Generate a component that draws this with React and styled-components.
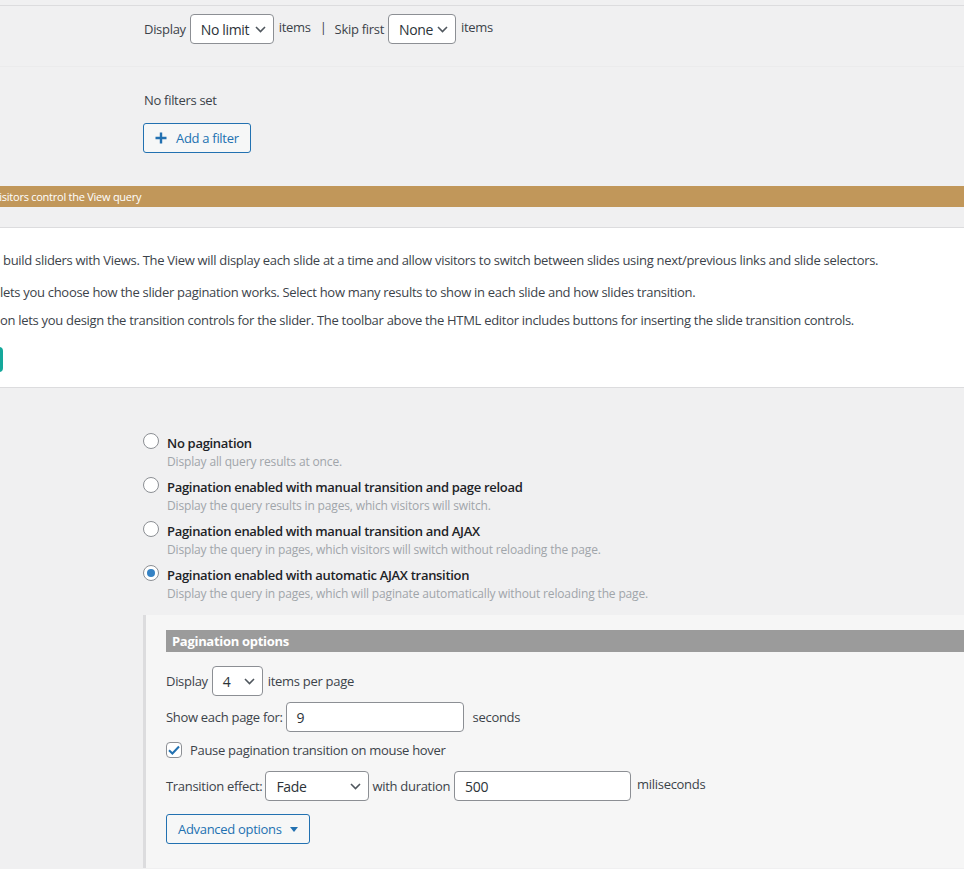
import React from 'react';
import styled, { createGlobalStyle } from 'styled-components';

const FONT = `"Open Sans", "Noto Sans", sans-serif`;

const GlobalStyle = createGlobalStyle`
    body { margin: 0; background: #f0f0f1; font-family: ${FONT}; color: #3c434a; font-size: 13px; letter-spacing: -0.3px; }
    * { box-sizing: border-box; }
`;

const Page = styled.div`
    width: 964px; height: 869px; overflow: hidden; background: #f0f0f1;
`;

const TopRule = styled.div`
    height: 6px; border-bottom: 1px solid #dcdcde;
`;

const QueryRow = styled.div`
    height: 61px; padding: 8px 0 0 144px;
    display: flex; align-items: flex-start;
    border-bottom: 1px solid #ebebec;
`;

const Label = styled.span`
    line-height: ${p => p.$lh || 30}px; white-space: nowrap;
    color: ${p => p.$color || '#3c434a'};
    margin: 0 ${p => p.$mr || 0}px 0 ${p => p.$ml || 0}px;
`;

const SelectWrap = styled.div`
    display: flex; align-items: center; justify-content: space-between;
    width: ${p => p.$w}px; height: 30px; padding: 0 7px 0 10px;
    background: #fff; border: 1px solid #8c8f94; border-radius: 4px;
    color: #2c3338; font-size: 14px; letter-spacing: -0.35px; flex-shrink: 0;
    margin: 0 ${p => p.$mr || 0}px 0 ${p => p.$ml || 0}px;
`;

const Input = styled.div`
    width: ${p => p.$w}px; height: 30px; padding: 0 10px;
    margin: 0 ${p => p.$mr || 0}px 0 ${p => p.$ml || 0}px;
    background: #fff; border: 1px solid #8c8f94; border-radius: 4px;
    display: flex; align-items: center; color: #2c3338; font-size: 14px; flex-shrink: 0;
`;

const Chevron = () => (
    <svg width="11" height="7" viewBox="0 0 11 7" fill="none">
        <path d="M1 1l4.5 4.5L10 1" stroke="#50575e" strokeWidth="1.6" />
    </svg>
);

const Select = ({ w, ml, mr, children }) => (
    <SelectWrap $w={w} $ml={ml} $mr={mr}>
        <span>{children}</span>
        <Chevron />
    </SelectWrap>
);

const FilterSection = styled.div`
    height: 119px; padding: 25px 0 0 143px;
`;

const NoFilters = styled.div`
    line-height: 17px; padding-left: 1px;
`;

const OutlineButton = styled.button`
    display: inline-flex; align-items: center; gap: ${p => p.$gap || 8}px;
    height: 30px; padding: 0 ${p => p.$pr || 11}px 0 11px; margin-top: ${p => p.$mt || 0}px;
    font-family: ${FONT}; font-size: 13px; letter-spacing: -0.3px; color: #2271b1;
    background: #f6f7f7; border: 1px solid #2271b1; border-radius: 3px; cursor: pointer;
`;

const GoldBar = styled.div`
    height: 21px; background: #c1975a; color: #fff;
    font-size: 11px; letter-spacing: -0.25px; line-height: 21px; text-indent: -7px;
    white-space: nowrap; overflow: hidden;
`;

const IntroBox = styled.div`
    margin-top: 20px; height: 161px; background: #fff;
    border-top: 1px solid #dcdcde; border-bottom: 1px solid #dcdcde;
    padding-top: 23px; overflow: hidden;
`;

const IntroLine = styled.p`
    margin: ${p => p.$mt || 0}px 0 0; line-height: 18px; white-space: nowrap;
    padding-left: ${p => p.$pl || 0}px; color: #3c434a;
`;

const TealButton = styled.div`
    width: 103px; height: 25px; margin: 18px 0 0 -100px;
    background: #14a89b; border-radius: 4px;
`;

const PaginationSection = styled.div`
    padding: 45px 0 0 143px;
`;

const Option = styled.div`
    display: grid; grid-template-columns: 24px 1fr;
    margin-bottom: 7px;
`;

const Radio = styled.span`
    width: 16px; height: 16px; border-radius: 50%;
    border: 1px solid #8c8f94; background: #fff;
    display: flex; align-items: center; justify-content: center;
    &::after {
        content: ''; width: 8px; height: 8px; border-radius: 50%;
        background: ${p => p.$checked ? '#3582c4' : 'transparent'};
    }
`;

const OptionTitle = styled.div`
    font-weight: 600; color: #1d2327; line-height: 20px;
`;

const OptionDesc = styled.div`
    grid-column: 2; font-size: 12px; letter-spacing: -0.15px; color: #a0a5aa; line-height: 17px;
`;

const Panel = styled.div`
    margin-top: 13px; border-left: 3px solid #dcdcde; background: #f6f6f6;
    padding: 15px 0 24px 20px;
`;

const PanelHeader = styled.div`
    height: 22px; line-height: 22px; padding-left: 6px;
    background: #9b9b9b; color: #fff; font-weight: 700;
`;

const FieldRow = styled.div`
    display: flex; align-items: ${p => p.$center ? 'center' : 'flex-start'};
    margin-top: ${p => p.$mt || 0}px;
`;

const CheckBox = styled.span`
    width: 16px; height: 16px; margin-right: 8px;
    border: 1px solid #8c8f94; border-radius: 4px;
    background: #fff; display: flex; align-items: center; justify-content: center;
`;

const Caret = styled.span`
    width: 0; height: 0; margin-left: 2px;
    border-left: 4px solid transparent; border-right: 4px solid transparent;
    border-top: 5px solid #2271b1;
`;

const options = [
    { title: 'No pagination', desc: 'Display all query results at once.' },
    { title: 'Pagination enabled with manual transition and page reload', desc: 'Display the query results in pages, which visitors will switch.' },
    { title: 'Pagination enabled with manual transition and AJAX', desc: 'Display the query in pages, which visitors will switch without reloading the page.' },
    { title: 'Pagination enabled with automatic AJAX transition', desc: 'Display the query in pages, which will paginate automatically without reloading the page.', checked: true },
];

function App() {
    return (
        <Page>
            <GlobalStyle />
            <TopRule />
            <QueryRow>
                <Label>Display</Label>
                <Select w={84} ml={4}>No limit</Select>
                <Label $lh={26} $ml={5}>items</Label>
                <Label $lh={26} $ml={9} $mr={8}>|</Label>
                <Label>Skip first</Label>
                <Select w={68} ml={4}>None</Select>
                <Label $lh={26} $ml={5}>items</Label>
            </QueryRow>

            <FilterSection>
                <NoFilters>No filters set</NoFilters>
                <OutlineButton $mt={14} $gap={9}>
                    <svg width="12" height="12" viewBox="0 0 12 12">
                        <path d="M6 0.5v11M0.5 6h11" stroke="#2271b1" strokeWidth="2.4" />
                    </svg>
                    Add a filter
                </OutlineButton>
            </FilterSection>

            <GoldBar>Visitors control the View query</GoldBar>

            <IntroBox>
                <IntroLine $pl={3}>build sliders with Views. The View will display each slide at a time and allow visitors to switch between slides using next/previous links and slide selectors.</IntroLine>
                <IntroLine $mt={14}>lets you choose how the slider pagination works. Select how many results to show in each slide and how slides transition.</IntroLine>
                <IntroLine $mt={10}>on lets you design the transition controls for the slider. The toolbar above the HTML editor includes buttons for inserting the slide transition controls.</IntroLine>
                <TealButton />
            </IntroBox>

            <PaginationSection>
                {options.map(o => (
                    <Option key={o.title}>
                        <Radio $checked={o.checked} />
                        <OptionTitle>{o.title}</OptionTitle>
                        <OptionDesc>{o.desc}</OptionDesc>
                    </Option>
                ))}

                <Panel>
                    <PanelHeader>Pagination options</PanelHeader>
                    <FieldRow $mt={14}>
                        <Label>Display</Label>
                        <Select w={51} ml={4} mr={5}>4</Select>
                        <Label>items per page</Label>
                    </FieldRow>
                    <FieldRow $mt={6}>
                        <Label>Show each page for:</Label>
                        <Input $w={178} $ml={3} $mr={9}>9</Input>
                        <Label>seconds</Label>
                    </FieldRow>
                    <FieldRow $mt={9} $center>
                        <CheckBox>
                            <svg width="12" height="10" viewBox="0 0 12 10">
                                <path d="M1 5.2l3.4 3.3L11 1.5" stroke="#2271b1" strokeWidth="2" fill="none" />
                            </svg>
                        </CheckBox>
                        <Label $lh={18}>Pause pagination transition on mouse hover</Label>
                    </FieldRow>
                    <FieldRow $mt={12}>
                        <Label>Transition effect:</Label>
                        <Select w={104} ml={3} mr={3}>Fade</Select>
                        <Label>with duration</Label>
                        <Input $w={177} $ml={4} $mr={6}>500</Input>
                        <Label $lh={26}>miliseconds</Label>
                    </FieldRow>
                    <OutlineButton $mt={13} $gap={6}>
                        Advanced options
                        <Caret />
                    </OutlineButton>
                </Panel>
            </PaginationSection>
        </Page>
    );
}

export default App;
